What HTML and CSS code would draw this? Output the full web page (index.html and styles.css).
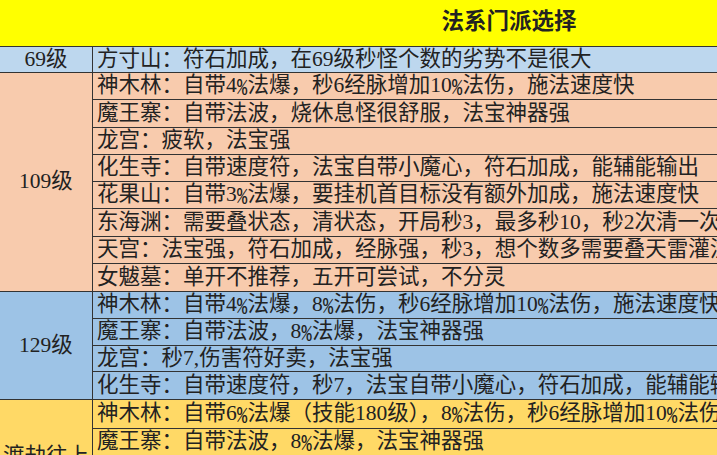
FILE: index.html
```html
<!DOCTYPE html>
<html lang="zh-CN">
<head>
<meta charset="utf-8">
<title>法系门派选择</title>
<link rel="stylesheet" href="styles.css">
</head>
<body>
<div class="sheet">
  <div class="title">法系门派选择</div>

  <div class="group blue-light g69">
    <div class="level">69级</div>
    <div class="rows">
      <div class="row">方寸山：符石加成，在69级秒怪个数的劣势不是很大</div>
    </div>
  </div>

  <div class="group peach g109">
    <div class="level">109级</div>
    <div class="rows">
      <div class="row">神木林：自带4<span class="pct">%</span>法爆，秒6经脉增加10<span class="pct">%</span>法伤，施法速度快</div>
      <div class="row">魔王寨：自带法波，烧休息怪很舒服，法宝神器强</div>
      <div class="row">龙宫：疲软，法宝强</div>
      <div class="row">化生寺：自带速度符，法宝自带小魔心，符石加成，能辅能输出</div>
      <div class="row">花果山：自带3<span class="pct">%</span>法爆，要挂机首目标没有额外加成，施法速度快</div>
      <div class="row">东海渊：需要叠状态，清状态，开局秒3，最多秒10，秒2次清一次状态</div>
      <div class="row">天宫：法宝强，符石加成，经脉强，秒3，想个数多需要叠天雷灌注</div>
      <div class="row">女魃墓：单开不推荐，五开可尝试，不分灵</div>
    </div>
  </div>

  <div class="group blue g129">
    <div class="level">129级</div>
    <div class="rows">
      <div class="row">神木林：自带4<span class="pct">%</span>法爆，8<span class="pct">%</span>法伤，秒6经脉增加10<span class="pct">%</span>法伤，施法速度快</div>
      <div class="row">魔王寨：自带法波，8<span class="pct">%</span>法爆，法宝神器强</div>
      <div class="row">龙宫：秒7,伤害符好卖，法宝强</div>
      <div class="row">化生寺：自带速度符，秒7，法宝自带小魔心，符石加成，能辅能输出</div>
    </div>
  </div>

  <div class="group gold gtop">
    <div class="level">渡劫往上</div>
    <div class="rows">
      <div class="row">神木林：自带6<span class="pct">%</span>法爆（技能180级），8<span class="pct">%</span>法伤，秒6经脉增加10<span class="pct">%</span>法伤，施法速度快</div>
      <div class="row">魔王寨：自带法波，8<span class="pct">%</span>法爆，法宝神器强</div>
      <div class="row">龙宫：秒7,伤害符好卖，法宝强</div>
      <div class="row">化生寺：自带速度符，秒7，法宝自带小魔心，符石加成，能辅能输出</div>
    </div>
  </div>
</div>
</body>
</html>
```

FILE: styles.css
```css
html, body {
  margin: 0;
  padding: 0;
  overflow: hidden;
  background: #ffffff;
}

.sheet {
  width: 1018px;
  font-family: "Liberation Serif", "Noto Sans CJK SC", serif;
  color: #222222;
  font-size: 21.5px;
  line-height: 1.1;
}

.title {
  box-sizing: border-box;
  height: 47px;
  background: #ffff00;
  border-bottom: 1px solid #333333;
  display: flex;
  align-items: center;
  justify-content: center;
  font-weight: bold;
  font-size: 22.5px;
  padding-bottom: 2px;
}

.group {
  display: grid;
  grid-template-columns: 93px 1fr;
  border-bottom: 1px solid #333333;
}

.level {
  border-right: 1px solid #333333;
  display: flex;
  align-items: center;
  justify-content: center;
  white-space: nowrap;
}

.rows {
  display: flex;
  flex-direction: column;
}

.row {
  display: flex;
  align-items: center;
  padding-left: 4px;
  white-space: nowrap;
  overflow: hidden;
  border-bottom: 1px solid #333333;
  box-sizing: border-box;
}

.row:last-child {
  border-bottom: none;
}

.pct {
  font-family: "Noto Sans CJK SC", sans-serif;
  font-feature-settings: "hwid" 1;
}

.g69 .row { height: 25px; }
.g109 .row { height: 27.25px; }
.g129 .row { height: 26.75px; }
.gtop .row { height: 28.5px; }

.blue-light { background: #bdd7ee; }
.peach { background: #f8cbad; }
.blue { background: #9dc3e6; }
.gold { background: #ffd966; }
```
